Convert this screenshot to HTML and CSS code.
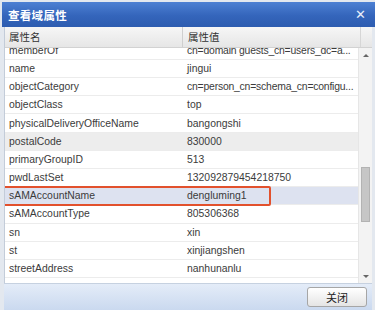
FILE: index.html
```html
<!DOCTYPE html>
<html lang="zh">
<head>
  <meta charset="UTF-8" />
  <title>查看域属性</title>
  <link rel="stylesheet" href="styles.css">
</head>
<body>
  <div class="window">
    <div class="titlebar">
      <span class="title">查看域属性</span>
      <span class="close">&#x2715;</span>
    </div>

    <div class="grid">
      <div class="head">
        <div class="cell name">属性名</div>
        <div class="cell value">属性值</div>
        <div class="head-pad"></div>
      </div>

      <div class="body">
        <div class="viewport">
          <div class="rows">
            <div class="row"><div class="cell name">memberOf</div><div class="cell value long">cn=domain guests_cn=users_dc=a...</div></div>
            <div class="row"><div class="cell name">name</div><div class="cell value">jingui</div></div>
            <div class="row"><div class="cell name">objectCategory</div><div class="cell value long">cn=person_cn=schema_cn=configu...</div></div>
            <div class="row"><div class="cell name">objectClass</div><div class="cell value">top</div></div>
            <div class="row"><div class="cell name">physicalDeliveryOfficeName</div><div class="cell value">bangongshi</div></div>
            <div class="row hover"><div class="cell name">postalCode</div><div class="cell value">830000</div></div>
            <div class="row"><div class="cell name">primaryGroupID</div><div class="cell value">513</div></div>
            <div class="row"><div class="cell name">pwdLastSet</div><div class="cell value">132092879454218750</div></div>
            <div class="row selected">
              <div class="cell name">sAMAccountName</div><div class="cell value">dengluming1</div>
              <div class="mark"></div>
            </div>
            <div class="row"><div class="cell name">sAMAccountType</div><div class="cell value">805306368</div></div>
            <div class="row"><div class="cell name">sn</div><div class="cell value">xin</div></div>
            <div class="row"><div class="cell name">st</div><div class="cell value">xinjiangshen</div></div>
            <div class="row"><div class="cell name">streetAddress</div><div class="cell value">nanhunanlu</div></div>
          </div>
        </div>

        <div class="scrollbar">
          <div class="arrow up"></div>
          <div class="track"><div class="thumb"></div></div>
          <div class="arrow down"></div>
        </div>
      </div>
    </div>

    <div class="footer">
      <button class="btn">关闭</button>
    </div>
  </div>
</body>
</html>
```

FILE: styles.css
```css
body {
  margin: 0;
  padding: 0;
  font-family: "Liberation Sans", Arial, "Noto Sans CJK SC", sans-serif;
  background: #ffffff;
}
.window {
  width: 375px;
  height: 310px;
  box-sizing: border-box;
  padding-top: 2px;
  background: #e3e8ef;
  display: flex;
  flex-direction: column;
  overflow: hidden;
}
.titlebar {
  height: 25px;
  margin: 0 0 0 2px;
  padding: 0 9px 0 6px;
  display: flex;
  align-items: center;
  justify-content: space-between;
  background: linear-gradient(#4d80d3, #3465bb 55%, #2d5cb0);
  color: #ffffff;
}
.title {
  font-family: "Noto Sans CJK SC", sans-serif;
  font-weight: bold;
  font-size: 11.5px;
  letter-spacing: 0.3px;
}
.close {
  font-family: "DejaVu Sans", sans-serif;
  font-size: 13px;
  font-weight: bold;
  color: #e8eefa;
}
.grid {
  flex: 1;
  display: flex;
  flex-direction: column;
  margin: 0 3px 0 4px;
  background: #ffffff;
  border-left: 1px solid #c3ccd9;
}
.head {
  height: 21px;
  display: flex;
  background: linear-gradient(#f6f6f6, #e6e6e6);
  border-bottom: 1px solid #d2d2d2;
  box-sizing: border-box;
  font-family: "Noto Sans CJK SC", sans-serif;
  font-size: 10.5px;
  color: #333;
  position: relative;
  z-index: 1;
}
.head .cell {
  line-height: 20px;
}
.head .name {
  border-right: 1px solid #cfcfcf;
}
.head-pad {
  flex: 1;
  border-left: 1px solid #d6d6d6;
}
.cell {
  box-sizing: border-box;
  padding-left: 4px;
  white-space: nowrap;
  overflow: hidden;
}
.cell.name {
  width: 178px;
}
.cell.value {
  width: 177px;
  padding-left: 5px;
}
.cell.long {
  letter-spacing: -0.2px;
}
.body {
  flex: 1;
  display: flex;
  min-height: 0;
}
.viewport {
  width: 355px;
  overflow: hidden;
}
.rows {
  margin-top: -6.3px;
}
.row {
  height: 18.2px;
  display: flex;
  align-items: center;
  border-bottom: 1px solid #ececec;
  box-sizing: border-box;
  font-size: 10.4px;
  color: #3b3b3b;
  position: relative;
}
.row.hover {
  background: #ededed;
}
.row.selected {
  background: #dde2f0;
}
.mark {
  position: absolute;
  left: -2px;
  top: -1px;
  width: 268px;
  height: 20px;
  box-sizing: border-box;
  border: 2px solid #e2512d;
  border-radius: 2px;
}
.scrollbar {
  width: 13px;
  display: flex;
  flex-direction: column;
  background: #f3f3f3;
  border-left: 1px solid #e6e6e6;
}
.arrow {
  height: 14px;
  display: flex;
  align-items: center;
  justify-content: center;
}
.arrow::before {
  content: "";
  border-left: 3px solid transparent;
  border-right: 3px solid transparent;
}
.arrow.up::before {
  border-bottom: 3px solid #666;
}
.arrow.down::before {
  border-top: 3px solid #666;
}
.track {
  flex: 1;
}
.thumb {
  margin: 105px 0 0 2px;
  width: 9px;
  height: 55px;
  box-sizing: border-box;
  background: #c6c6c6;
  border: 1px solid #b3b3b3;
}
.footer {
  height: 27px;
  margin: 0 3px 0 4px;
  display: flex;
  align-items: center;
  justify-content: flex-end;
  padding-right: 5px;
  background: linear-gradient(#e4ecf8, #cad9ef);
  border-top: 1px solid #c6d1e0;
  box-sizing: border-box;
}
.btn {
  width: 60px;
  height: 20px;
  padding: 0;
  font-family: "Noto Sans CJK SC", sans-serif;
  font-size: 11px;
  color: #222;
  background: linear-gradient(#ffffff, #e4e4e4);
  border: 1px solid #a6a6a6;
  border-radius: 3px;
}
```
